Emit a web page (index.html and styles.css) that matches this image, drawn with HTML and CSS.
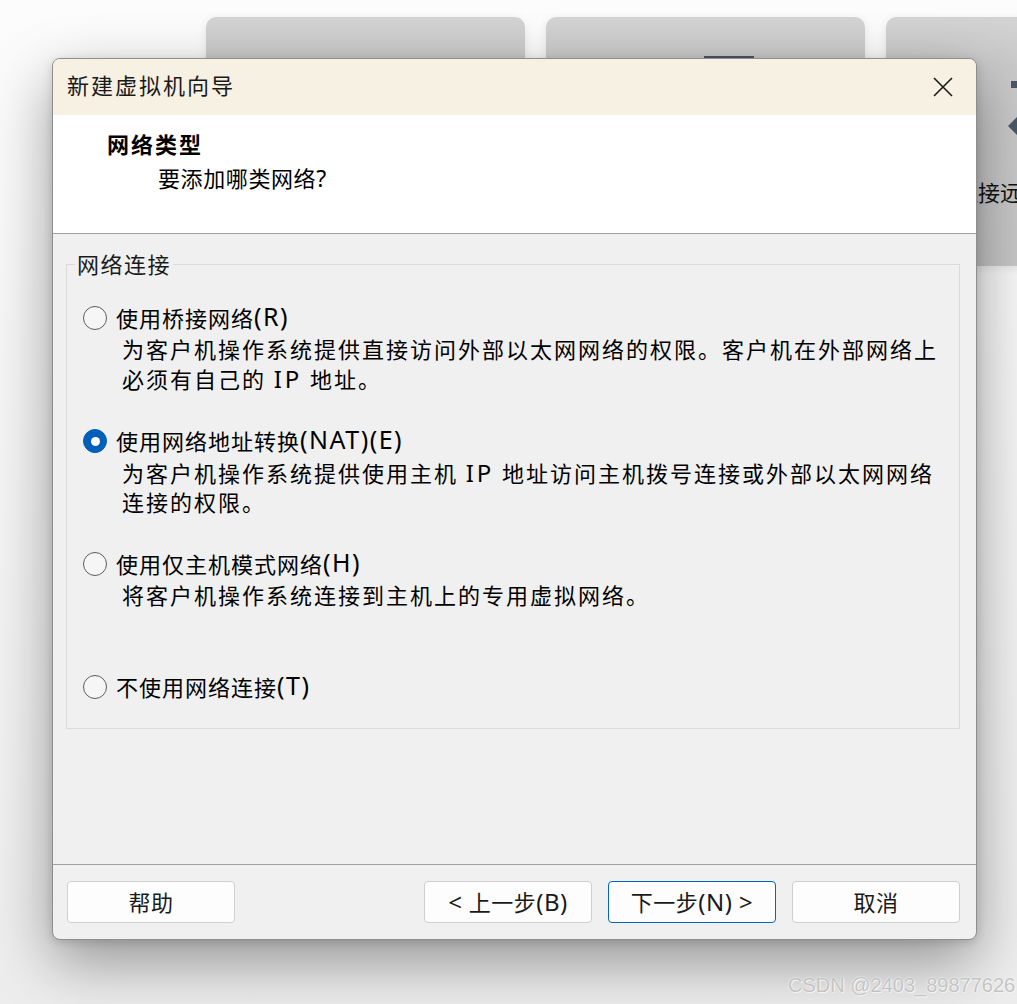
FILE: index.html
```html
<!DOCTYPE html>
<html lang="zh-CN">
<head>
<meta charset="utf-8">
<title>新建虚拟机向导</title>
<link rel="stylesheet" href="styles.css">
</head>
<body>
<div class="desktop">
  <div class="card card-1"></div>
  <div class="card card-2"><span class="card2-icon"></span></div>
  <div class="card card-3">
    <svg class="card3-icon" viewBox="0 0 60 60" width="60" height="60">
      <rect x="6" y="3" width="40" height="7" fill="#4a5866"/>
      <polygon points="3,48 12,39 12,57" fill="#4a5866"/>
    </svg>
    <span class="card3-text">连接远程服务器</span>
  </div>

  <div class="dialog">
    <div class="titlebar">
      <span class="title">新建虚拟机向导</span>
      <svg class="close" viewBox="0 0 20 20" width="20" height="20">
        <path d="M1 1L19 19M19 1L1 19"/>
      </svg>
    </div>
    <div class="header">
      <div class="header-title">网络类型</div>
      <div class="header-sub">要添加哪类网络<span class="lat">?</span></div>
    </div>
    <div class="body">
      <fieldset class="group">
        <legend>网络连接</legend>
        <div class="options">
          <div class="option">
            <div class="opt-label"><span class="radio"></span>使用桥接网络<span class="lat">(R)</span></div>
            <div class="opt-desc">为客户机操作系统提供直接访问外部以太网网络的权限。客户机在外部网络上<br>必须有自己的 <span class="lat">IP</span> 地址。</div>
          </div>
          <div class="option">
            <div class="opt-label"><span class="radio checked"></span>使用网络地址转换<span class="lat">(NAT)(E)</span></div>
            <div class="opt-desc">为客户机操作系统提供使用主机 <span class="lat">IP</span> 地址访问主机拨号连接或外部以太网网络<br>连接的权限。</div>
          </div>
          <div class="option">
            <div class="opt-label"><span class="radio"></span>使用仅主机模式网络<span class="lat">(H)</span></div>
            <div class="opt-desc">将客户机操作系统连接到主机上的专用虚拟网络。</div>
          </div>
          <div class="option">
            <div class="opt-label"><span class="radio"></span>不使用网络连接<span class="lat">(T)</span></div>
          </div>
        </div>
      </fieldset>
    </div>
    <div class="footer">
      <button class="btn">帮助</button>
      <div class="spacer"></div>
      <button class="btn"><span class="lat">&lt;</span> 上一步<span class="lat">(B)</span></button>
      <button class="btn primary">下一步<span class="lat">(N) &gt;</span></button>
      <button class="btn">取消</button>
    </div>
  </div>

  <div class="watermark">CSDN @2403_89877626</div>
</div>
</body>
</html>
```

FILE: styles.css
```css
* { box-sizing: border-box; }

html, body {
  margin: 0;
  padding: 0;
  width: 1017px;
  height: 1004px;
  overflow: hidden;
}

body {
  background: #f6f6f6;
  font-family: "Noto Sans", "Noto Sans CJK SC", sans-serif;
  color: #000;
}

.desktop {
  position: relative;
  width: 1017px;
  height: 1004px;
  overflow: hidden;
  background: linear-gradient(180deg, #fcfcfc 0%, #f5f5f5 40%, #ededed 100%);
}

.lat {
  font-family: "Noto Sans", sans-serif;
  font-size: 25px;
  letter-spacing: 1.5px;
}

/* background windows/cards on the desktop */
.card {
  position: absolute;
  top: 17px;
  width: 319px;
  height: 249px;
  border-radius: 10px;
  background: linear-gradient(180deg, #d3d3d3 0%, #c9c9c9 20%, #c6c6c6 100%);
  box-shadow: 0 2px 10px rgba(0, 0, 0, 0.08);
}
.card-1 { left: 206px; }
.card-2 { left: 546px; }
.card-3 { left: 886px; }

.card2-icon {
  position: absolute;
  left: 158px;
  top: 39px;
  width: 50px;
  height: 12px;
  background: #4a5866;
}

.card3-icon {
  position: absolute;
  left: 119px;
  top: 61px;
}

.card3-text {
  position: absolute;
  left: 70px;
  top: 157px;
  font-family: "Noto Sans CJK SC", sans-serif;
  font-size: 22px;
  line-height: 34px;
  white-space: nowrap;
  color: #111;
}

/* dialog window */
.dialog {
  position: absolute;
  left: 52px;
  top: 58px;
  width: 925px;
  height: 882px;
  border: 1px solid #8e8e8e;
  border-radius: 8px;
  background: #f0f0f0;
  display: flex;
  flex-direction: column;
  overflow: hidden;
  box-shadow: 0 22px 60px rgba(0, 0, 0, 0.38), 0 2px 10px rgba(0, 0, 0, 0.14);
}

.titlebar {
  height: 56px;
  flex: none;
  background: #f7f1e3;
  display: flex;
  align-items: center;
  padding: 0 23px 0 14px;
}
.title {
  flex: 1;
  font-family: "Noto Sans CJK SC", sans-serif;
  font-size: 22px;
  letter-spacing: 2px;
  line-height: 30px;
  color: #1a1a1a;
  margin-bottom: 6px;
}
.close {
  flex: none;
  stroke: #1a1a1a;
  stroke-width: 1.6;
  fill: none;
}

.header {
  height: 119px;
  flex: none;
  background: #fff;
  border-bottom: 1px solid #a0a0a0;
  padding: 13px 0 0 54px;
}
.header-title {
  font-family: "Noto Sans CJK SC", sans-serif;
  font-weight: 700;
  font-size: 22px;
  letter-spacing: 2px;
  line-height: 30px;
}
.header-sub {
  margin-top: 5px;
  padding-left: 51px;
  font-size: 22px;
  letter-spacing: 0.6px;
  line-height: 30px;
}
.header-sub .lat { font-size: 23px; }

.body {
  flex: 1;
  padding: 16px 16px 0 13px;
}

.group {
  margin: 0;
  padding: 0;
  border: 1px solid #dadada;
  width: 894px;
}
.group legend {
  margin-left: 8px;
  padding: 0 2px;
  font-size: 22px;
  letter-spacing: 1.5px;
  line-height: 28px;
  color: #1a1a1a;
}

.options {
  padding: 22px 16px 25px 16px;
  display: flex;
  flex-direction: column;
  gap: 28px;
}

.opt-label {
  display: flex;
  align-items: center;
  height: 34px;
  font-size: 22px;
  letter-spacing: 1px;
  white-space: nowrap;
}
.opt-label .lat {
  position: relative;
  top: -1px;
}
.radio {
  flex: none;
  width: 24px;
  height: 24px;
  border-radius: 50%;
  border: 1.5px solid #5c5c5c;
  background: #f6f6f6;
  margin-right: 9px;
  position: relative;
  top: 1px;
}
.radio.checked {
  border-color: #005fb8;
  background: #005fb8;
}
.radio.checked::after {
  content: "";
  position: absolute;
  left: 50%;
  top: 50%;
  width: 9px;
  height: 9px;
  margin: -4.5px 0 0 -4.5px;
  border-radius: 50%;
  background: #fff;
}

.opt-desc {
  margin-top: 1px;
  padding-left: 39px;
  min-height: 60px;
  font-size: 22px;
  letter-spacing: 2px;
  line-height: 29px;
  white-space: nowrap;
}
.opt-desc .lat { font-size: 24px; letter-spacing: 3px; }

.footer {
  height: 75px;
  flex: none;
  border-top: 1px solid #a0a0a0;
  display: flex;
  align-items: flex-start;
  gap: 16px;
  padding: 16px 16px 0 14px;
}
.spacer { flex: 1; }
.btn {
  width: 168px;
  height: 42px;
  background: #fdfdfd;
  border: 1px solid #d0d0d0;
  border-radius: 4px;
  font-family: "Noto Sans", "Noto Sans CJK SC", sans-serif;
  font-size: 22px;
  line-height: 30px;
  letter-spacing: 0.5px;
  color: #1a1a1a;
  padding: 0 0 1px 0;
}
.btn .lat { font-size: 24px; letter-spacing: 0.5px; }
.btn.primary {
  border: 1px solid #0067c0;
}

.watermark {
  position: absolute;
  left: 788px;
  top: 972px;
  font-family: "Liberation Sans", Arial, sans-serif;
  font-size: 20px;
  line-height: 26px;
  color: #c4c4c4;
  text-shadow: 0 0 2px #fff, 1px 1px 0 #f0f0f0;
  white-space: nowrap;
}
```
